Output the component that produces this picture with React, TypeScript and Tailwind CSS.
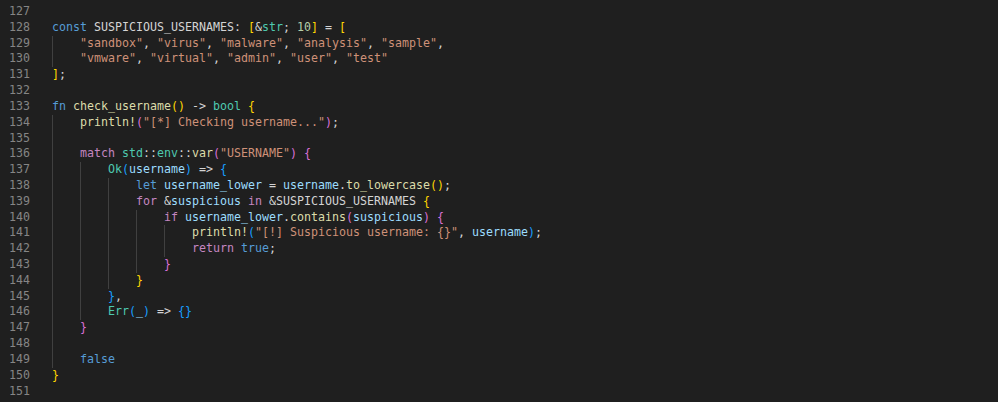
const kw = 'text-[#569cd6]';
const ctrl = 'text-[#c586c0]';
const fn = 'text-[#dcdcaa]';
const ty = 'text-[#4ec9b0]';
const str = 'text-[#ce9178]';
const num = 'text-[#b5cea8]';
const v = 'text-[#9cdcfe]';
const p = 'text-[#d4d4d4]';
const b1 = 'text-[#ffd700]';
const b2 = 'text-[#da70d6]';
const b3 = 'text-[#179fff]';

type Tok = [string, string];
type Line = { n: number; indent: number; toks: Tok[] };

const lines: Line[] = [
  { n: 127, indent: 0, toks: [] },
  {
    n: 128,
    indent: 0,
    toks: [
      ['const', kw], [' SUSPICIOUS_USERNAMES: ', p], ['[', b1], ['&', p], ['str', ty],
      ['; ', p], ['10', num], [']', b1], [' = ', p], ['[', b1],
    ],
  },
  {
    n: 129,
    indent: 1,
    toks: [
      ['"sandbox"', str], [', ', p], ['"virus"', str], [', ', p], ['"malware"', str], [', ', p],
      ['"analysis"', str], [', ', p], ['"sample"', str], [',', p],
    ],
  },
  {
    n: 130,
    indent: 1,
    toks: [
      ['"vmware"', str], [', ', p], ['"virtual"', str], [', ', p], ['"admin"', str], [', ', p],
      ['"user"', str], [', ', p], ['"test"', str],
    ],
  },
  { n: 131, indent: 0, toks: [[']', b1], [';', p]] },
  { n: 132, indent: 0, toks: [] },
  {
    n: 133,
    indent: 0,
    toks: [
      ['fn', kw], [' ', p], ['check_username', fn], ['()', b1], [' -> ', p], ['bool', ty], [' ', p], ['{', b1],
    ],
  },
  {
    n: 134,
    indent: 1,
    toks: [['println!', fn], ['(', b2], ['"[*] Checking username..."', str], [')', b2], [';', p]],
  },
  { n: 135, indent: 1, toks: [] },
  {
    n: 136,
    indent: 1,
    toks: [
      ['match', ctrl], [' ', p], ['std', ty], ['::', p], ['env', ty], ['::', p], ['var', fn],
      ['(', b2], ['"USERNAME"', str], [')', b2], [' ', p], ['{', b2],
    ],
  },
  {
    n: 137,
    indent: 2,
    toks: [['Ok', ty], ['(', b3], ['username', v], [')', b3], [' => ', p], ['{', b3]],
  },
  {
    n: 138,
    indent: 3,
    toks: [
      ['let', kw], [' ', p], ['username_lower', v], [' = ', p], ['username', v], ['.', p],
      ['to_lowercase', fn], ['()', b1], [';', p],
    ],
  },
  {
    n: 139,
    indent: 3,
    toks: [
      ['for', ctrl], [' &', p], ['suspicious', v], [' ', p], ['in', ctrl], [' &SUSPICIOUS_USERNAMES ', p], ['{', b1],
    ],
  },
  {
    n: 140,
    indent: 4,
    toks: [
      ['if', ctrl], [' ', p], ['username_lower', v], ['.', p], ['contains', fn], ['(', b2],
      ['suspicious', v], [')', b2], [' ', p], ['{', b2],
    ],
  },
  {
    n: 141,
    indent: 5,
    toks: [
      ['println!', fn], ['(', b3], ['"[!] Suspicious username: {}"', str], [', ', p], ['username', v],
      [')', b3], [';', p],
    ],
  },
  { n: 142, indent: 5, toks: [['return', ctrl], [' ', p], ['true', kw], [';', p]] },
  { n: 143, indent: 4, toks: [['}', b2]] },
  { n: 144, indent: 3, toks: [['}', b1]] },
  { n: 145, indent: 2, toks: [['}', b3], [',', p]] },
  {
    n: 146,
    indent: 2,
    toks: [['Err', ty], ['(', b3], ['_', v], [')', b3], [' => ', p], ['{}', b3]],
  },
  { n: 147, indent: 1, toks: [['}', b2]] },
  { n: 148, indent: 1, toks: [] },
  { n: 149, indent: 1, toks: [['false', kw]] },
  { n: 150, indent: 0, toks: [['}', b1]] },
  { n: 151, indent: 0, toks: [] },
];

export default function App() {
  return (
    <div
      className="w-[998px] h-[402px] overflow-hidden bg-[#1f1f1f] pt-[4px] text-[11.63px] leading-[15.82px]"
      style={{ fontFamily: '"DejaVu Sans Mono", "Liberation Mono", monospace' }}
    >
      {lines.map((line) => (
        <div key={line.n} className="flex h-[15.82px]">
          <div className="w-[30px] shrink-0 text-right text-[#858585]">{line.n}</div>
          <div className="ml-[22px] flex items-stretch whitespace-pre">
            {Array.from({ length: line.indent }).map((_, i) => (
              <span key={i} className="w-[28px] shrink-0 border-l border-[#404040]" />
            ))}
            <span>
              {line.toks.map(([t, c], i) => (
                <span key={i} className={c}>
                  {t}
                </span>
              ))}
            </span>
          </div>
        </div>
      ))}
    </div>
  );
}
